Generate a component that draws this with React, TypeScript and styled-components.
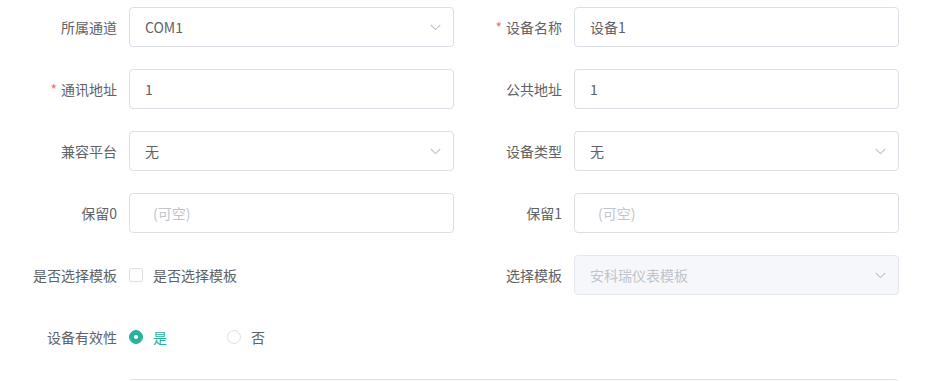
import React from 'react';
import styled, { createGlobalStyle } from 'styled-components';

const GlobalStyle = createGlobalStyle`
  html, body {
    margin: 0;
    padding: 0;
    background: #fff;
    overflow: hidden;
  }
  body {
    font-family: "Noto Sans CJK SC", "Liberation Sans", sans-serif;
    font-size: 14px;
    color: #606266;
  }
`;

const Form = styled.form`
  display: grid;
  grid-template-columns: 445px 445px;
  padding: 7px 0 0 9px;
  width: 947px;
  height: 381px;
  box-sizing: border-box;
  overflow: hidden;
`;

const Item = styled.div<{ $wide?: boolean }>`
  display: flex;
  align-items: center;
  height: 40px;
  margin-bottom: 22px;
  grid-column: ${(p) => (p.$wide ? '1 / span 2' : 'auto')};
`;

const Label = styled.label<{ $required?: boolean }>`
  flex: 0 0 120px;
  box-sizing: border-box;
  padding-right: 12px;
  text-align: right;
  line-height: 40px;
  color: #606266;
  white-space: nowrap;

  &::before {
    content: ${(p) => (p.$required ? '"*"' : 'none')};
    color: #f56c6c;
    margin-right: 4px;
  }
`;

const Control = styled.div`
  flex: 1;
  position: relative;
  height: 40px;
  display: flex;
  align-items: center;
`;

const Box = styled.div<{ $disabled?: boolean; $tall?: boolean }>`
  flex: 1;
  height: ${(p) => (p.$tall ? '60px' : '40px')};
  align-self: flex-start;
  box-sizing: border-box;
  border: 1px solid ${(p) => (p.$disabled ? '#e4e7ed' : '#dcdfe6')};
  border-radius: 4px;
  background: ${(p) => (p.$disabled ? '#f5f7fa' : '#fff')};
  padding: 0 30px 0 15px;
  display: flex;
  align-items: center;
`;

const Value = styled.span<{ $muted?: boolean }>`
  color: ${(p) => (p.$muted ? '#c0c4cc' : '#606266')};
  line-height: 38px;
`;

const Placeholder = styled.span`
  color: #c0c4cc;
  line-height: 38px;
  margin-left: 8px;
`;

const Arrow = styled.svg`
  position: absolute;
  right: 13px;
  top: 17px;
  width: 11px;
  height: 7px;
`;

const CheckBox = styled.span`
  width: 14px;
  height: 14px;
  box-sizing: border-box;
  border: 1px solid #dcdfe6;
  border-radius: 2px;
  background: #fff;
  margin-right: 10px;
`;

const Radio = styled.span<{ $checked?: boolean }>`
  display: inline-flex;
  align-items: center;
  margin-right: 60px;
  color: ${(p) => (p.$checked ? '#2ab19c' : '#606266')};
`;

const RadioDot = styled.span<{ $checked?: boolean }>`
  width: 14px;
  height: 14px;
  box-sizing: border-box;
  border-radius: 50%;
  border: 1px solid ${(p) => (p.$checked ? '#2ab19c' : '#dcdfe6')};
  background: ${(p) => (p.$checked ? '#2ab19c' : '#fff')};
  margin-right: 10px;
  display: flex;
  align-items: center;
  justify-content: center;

  &::after {
    content: '';
    width: 4px;
    height: 4px;
    border-radius: 50%;
    background: #fff;
    display: ${(p) => (p.$checked ? 'block' : 'none')};
  }
`;

const Chevron = () => (
  <Arrow viewBox="0 0 11 7">
    <path d="M0.8 1 L5.5 5.6 L10.2 1" fill="none" stroke="#c0c4cc" strokeWidth="1.1" />
  </Arrow>
);

const Input: React.FC<{ value?: string; placeholder?: string }> = ({ value, placeholder }) => (
  <Control>
    <Box>
      {value ? <Value>{value}</Value> : <Placeholder>{placeholder}</Placeholder>}
    </Box>
  </Control>
);

const Select: React.FC<{ value: string; disabled?: boolean }> = ({ value, disabled }) => (
  <Control>
    <Box $disabled={disabled}>
      <Value $muted={disabled}>{value}</Value>
    </Box>
    <Chevron />
  </Control>
);

const App: React.FC = () => (
  <>
    <GlobalStyle />
    <Form>
      <Item>
        <Label>所属通道</Label>
        <Select value="COM1" />
      </Item>
      <Item>
        <Label $required>设备名称</Label>
        <Input value="设备1" />
      </Item>

      <Item>
        <Label $required>通讯地址</Label>
        <Input value="1" />
      </Item>
      <Item>
        <Label>公共地址</Label>
        <Input value="1" />
      </Item>

      <Item>
        <Label>兼容平台</Label>
        <Select value="无" />
      </Item>
      <Item>
        <Label>设备类型</Label>
        <Select value="无" />
      </Item>

      <Item>
        <Label>保留0</Label>
        <Input placeholder="(可空)" />
      </Item>
      <Item>
        <Label>保留1</Label>
        <Input placeholder="(可空)" />
      </Item>

      <Item>
        <Label>是否选择模板</Label>
        <Control>
          <CheckBox />
          <span>是否选择模板</span>
        </Control>
      </Item>
      <Item>
        <Label>选择模板</Label>
        <Select value="安科瑞仪表模板" disabled />
      </Item>

      <Item $wide>
        <Label>设备有效性</Label>
        <Control>
          <Radio $checked>
            <RadioDot $checked />
            是
          </Radio>
          <Radio>
            <RadioDot />
            否
          </Radio>
        </Control>
      </Item>

      <Item $wide>
        <Label />
        <Control>
          <Box $tall />
        </Control>
      </Item>
    </Form>
  </>
);

export default App;
